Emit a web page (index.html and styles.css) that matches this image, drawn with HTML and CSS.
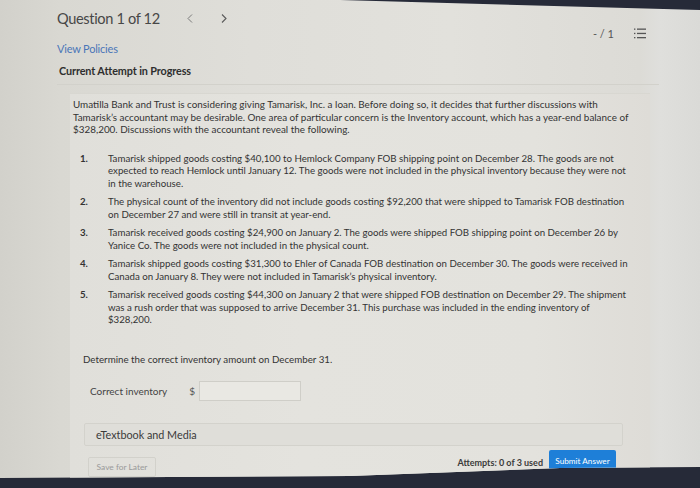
FILE: index.html
```html
<!DOCTYPE html>
<html>
<head>
<meta charset="utf-8">
<link rel="stylesheet" href="styles.css">
</head>
<body>
<div class="screen">
  <header class="qbar">
    <div class="qnav">
      <span class="qtitle">Question 1 of 12</span>
      <svg class="chev prev" width="6" height="9" viewBox="0 0 6 9"><path d="M5 0.5 L1 4.5 L5 8.5" fill="none" stroke="#7a7a7a" stroke-width="1"/></svg>
      <svg class="chev next" width="6" height="9" viewBox="0 0 6 9"><path d="M1 0.5 L5 4.5 L1 8.5" fill="none" stroke="#5a5a5a" stroke-width="1.1"/></svg>
    </div>
    <div class="score">
      <span class="pts">- / 1</span>
      <svg class="listicon" width="12" height="11" viewBox="0 0 12 11">
        <g fill="#555">
          <rect x="0" y="0.5" width="1.4" height="1.3"/>
          <rect x="0" y="4.8" width="1.4" height="1.3"/>
          <rect x="0" y="9" width="1.4" height="1.3"/>
          <rect x="3" y="0.5" width="9" height="1.3"/>
          <rect x="3" y="4.8" width="9" height="1.3"/>
          <rect x="3" y="9" width="9" height="1.3"/>
        </g>
      </svg>
    </div>
  </header>
  <a class="policies">View Policies</a>
  <div class="attempt">Current Attempt in Progress</div>
  <div class="panel">
    <p class="intro">Umatilla Bank and Trust is considering giving Tamarisk, Inc. a loan. Before doing so, it decides that further discussions with<br>Tamarisk’s accountant may be desirable. One area of particular concern is the Inventory account, which has a year-end balance of<br>$328,200. Discussions with the accountant reveal the following.</p>
    <ol class="items">
      <li><span class="num">1.</span><span class="txt">Tamarisk shipped goods costing $40,100 to Hemlock Company FOB shipping point on December 28. The goods are not<br>expected to reach Hemlock until January 12. The goods were not included in the physical inventory because they were not<br>in the warehouse.</span></li>
      <li><span class="num">2.</span><span class="txt">The physical count of the inventory did not include goods costing $92,200 that were shipped to Tamarisk FOB destination<br>on December 27 and were still in transit at year-end.</span></li>
      <li><span class="num">3.</span><span class="txt">Tamarisk received goods costing $24,900 on January 2. The goods were shipped FOB shipping point on December 26 by<br>Yanice Co. The goods were not included in the physical count.</span></li>
      <li><span class="num">4.</span><span class="txt">Tamarisk shipped goods costing $31,300 to Ehler of Canada FOB destination on December 30. The goods were received in<br>Canada on January 8. They were not included in Tamarisk’s physical inventory.</span></li>
      <li><span class="num">5.</span><span class="txt">Tamarisk received goods costing $44,300 on January 2 that were shipped FOB destination on December 29. The shipment<br>was a rush order that was supposed to arrive December 31. This purchase was included in the ending inventory of<br>$328,200.</span></li>
    </ol>
    <p class="determine">Determine the correct inventory amount on December 31.</p>
    <div class="answer-row">
      <span class="alabel">Correct inventory</span>
      <span class="dollar">$</span>
      <span class="ainput"></span>
    </div>
    <div class="etext">eTextbook and Media</div>
    <div class="actions">
      <span class="save">Save for Later</span>
      <div class="right">
        <span class="attempts">Attempts: 0 of 3 used</span>
        <span class="submit">Submit Answer</span>
      </div>
    </div>
  </div>
</div>
</body>
</html>
```

FILE: styles.css
```css
html, body {
  margin: 0;
  padding: 0;
}
body {
  width: 700px;
  height: 488px;
  overflow: hidden;
  background: #262a38;
  font-family: "Lato", "Liberation Sans", sans-serif;
  color: #3c3c3c;
}
.screen {
  width: 700px;
  height: 488px;
  box-sizing: border-box;
  padding-left: 57px;
  background:
    linear-gradient(90deg, #d2d1cb 0px, #d9d8d2 60px, #dfded9 250px, #e2e1dc 450px, #dcdbd6 640px, #dfdfdc 660px, #dadad7 700px);
  clip-path: polygon(0 0, 340px 0, 700px 10px, 700px 467px, 560px 468px, 350px 476px, 0 478px);
}
.qbar {
  display: flex;
  justify-content: space-between;
  width: 589px;
  height: 40px;
}
.qnav {
  display: flex;
  align-items: center;
  height: 36px;
}
.qtitle {
  font-size: 14.6px;
  color: #474747;
  letter-spacing: -0.35px;
}
.chev.prev {
  margin-left: 27px;
  margin-top: 1px;
}
.chev.next {
  margin-left: 28px;
  margin-top: 1px;
}
.score {
  display: flex;
  align-items: center;
  margin-top: 26px;
  height: 14px;
}
.pts {
  font-size: 11px;
  color: #555;
}
.listicon {
  margin-left: 20px;
}
.policies {
  display: block;
  font-size: 11px;
  color: #4a76b8;
  margin-top: 2px;
  line-height: 14px;
  letter-spacing: -0.2px;
}
.attempt {
  font-size: 10.8px;
  font-weight: bold;
  color: #2e2e2e;
  margin-top: 8px;
  line-height: 14px;
  padding-left: 2px;
  padding-bottom: 6px;
  width: 600px;
  border-bottom: 1px solid #d2d1cb;
  letter-spacing: -0.1px;
}
.panel {
  margin: 8px 0 0 13px;
  width: 580px;
  height: 400px;
  border-top: 1px solid #d8d7d1;
  background: linear-gradient(90deg, #e0dfda 0%, #e4e3de 40%, #e3e2dd 80%, #dedcd7 100%);
}
.intro {
  margin: 0 0 0 3px;
  padding-top: 4px;
  font-size: 9.9px;
  line-height: 12.5px;
  color: #333;
}
.items {
  list-style: none;
  margin: 16px 0 0 10px;
  padding: 0;
  font-size: 9.7px;
  line-height: 12.8px;
  color: #333;
}
.items li {
  display: flex;
  margin-bottom: 5.3px;
}
.num {
  width: 28px;
  flex: none;
  font-weight: bold;
  color: #333;
}
.txt {
  white-space: nowrap;
}
.determine {
  margin: 27px 0 0 13px;
  font-size: 9.75px;
  color: #333;
}
.answer-row {
  display: flex;
  align-items: center;
  margin: 16px 0 0 20px;
  font-size: 10px;
}
.alabel {
  color: #444;
}
.dollar {
  margin-left: 22px;
  color: #555;
}
.ainput {
  width: 100px;
  height: 18px;
  margin-left: 4px;
  border: 1px solid #cfcec8;
  background: #e9e8e3;
}
.etext {
  margin: 22px 0 0 14px;
  width: 539px;
  height: 23px;
  padding-left: 11px;
  box-sizing: border-box;
  display: flex;
  align-items: center;
  font-size: 10.8px;
  color: #3a3a3a;
  background: #dfded9;
  border: 1px solid #d3d2cc;
  border-radius: 2px;
}
.actions {
  display: flex;
  justify-content: space-between;
  align-items: flex-start;
  margin: 4px 0 0 18px;
  width: 528px;
}
.save {
  margin-top: 7px;
  width: 68px;
  height: 20px;
  box-sizing: border-box;
  border: 1px solid #d2d1cb;
  border-radius: 2px;
  font-size: 8.4px;
  color: #9a9a9a;
  display: flex;
  align-items: center;
  justify-content: center;
}
.right {
  display: flex;
  align-items: center;
}
.attempts {
  font-size: 9px;
  font-weight: bold;
  color: #3a3a3a;
  margin-right: 6px;
  margin-top: 3px;
}
.submit {
  width: 67px;
  height: 21px;
  box-sizing: border-box;
  display: flex;
  align-items: center;
  justify-content: center;
  background: #1e7fd8;
  color: #fff;
  font-size: 8.2px;
  border-radius: 2px;
}
```
